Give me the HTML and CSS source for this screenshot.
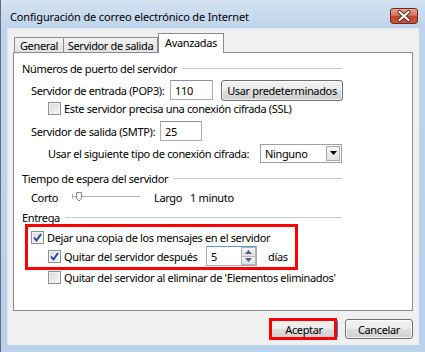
FILE: index.html
```html
<!DOCTYPE html>
<html>
<head>
  <title>Configuración de correo electrónico de Internet</title>
  <link rel="stylesheet" href="styles.css">
</head>
<body>
  <div class="frame">
    <div class="titlebar">
      <span class="title">Configuración de correo electrónico de Internet</span>
      <button class="close" aria-label="Cerrar">
        <svg width="28" height="16" viewBox="0 0 28 16">
          <path d="M9.5 4 L18.5 12 M18.5 4 L9.5 12" stroke="#5a2418" stroke-width="4" stroke-linecap="round" fill="none"/>
          <path d="M9.5 4 L18.5 12 M18.5 4 L9.5 12" stroke="#ffffff" stroke-width="2.2" stroke-linecap="round" fill="none"/>
        </svg>
      </button>
    </div>

    <div class="client">
      <div class="tabs">
        <div class="tab tab-general">General</div>
        <div class="tab tab-salida">Servidor de salida</div>
        <div class="tab tab-avanzadas active">Avanzadas</div>
      </div>

      <div class="panel">
        <!-- Números de puerto -->
        <div class="group-title first"><span>Números de puerto del servidor</span><i class="rule"></i></div>

        <div class="row tall indent1 row-pop3">
          <span class="label lbl-pop3">Servidor de entrada (POP3):</span>
          <span class="field field-pop3">110</span>
          <button class="btn btn-defaults">Usar predeterminados</button>
        </div>

        <div class="row small indent2">
          <span class="check"></span>
          <span>Este servidor precisa una conexión cifrada (SSL)</span>
        </div>

        <div class="row tall indent1 row-smtp">
          <span class="label lbl-smtp">Servidor de salida (SMTP):</span>
          <span class="field field-smtp">25</span>
        </div>

        <div class="row mid indent2 row-cifrada">
          <span class="label lbl-cifrada">Usar el siguiente tipo de conexión cifrada:</span>
          <span class="combo">
            <span class="combo-text">Ninguno</span>
            <span class="combo-arrow">
              <svg width="7" height="4" viewBox="0 0 7 4"><path d="M0 0 H7 L3.5 4 Z" fill="#000"/></svg>
            </span>
          </span>
        </div>

        <!-- Tiempo de espera -->
        <div class="group-title gt-tiempo"><span>Tiempo de espera del servidor</span><i class="rule"></i></div>

        <div class="row indent1 row-slider">
          <span class="label lbl-corto">Corto</span>
          <svg class="slider" width="68" height="12" viewBox="0 0 68 12">
            <rect x="0" y="5" width="68" height="1" fill="#b0b0b0"/>
            <rect x="0" y="6" width="68" height="1" fill="#ffffff"/>
            <rect x="0" y="3" width="1" height="5" fill="#b0b0b0"/>
            <path d="M4.5 1.5 H9.5 V7.5 L7 10 L4.5 7.5 Z" fill="#f4f4f4" stroke="#8a8a8a"/>
          </svg>
          <span class="largo">Largo</span>
          <span class="minuto">1 minuto</span>
        </div>

        <!-- Entrega -->
        <div class="group-title gt-entrega"><span>Entrega</span><i class="rule"></i></div>

        <div class="row indent1 row-copia">
          <span class="check checked">
            <svg width="11" height="11" viewBox="0 0 11 11"><path d="M2 5.5 L4.5 8.5 L9 2" stroke="#22409a" stroke-width="1.9" fill="none"/></svg>
          </span>
          <span>Dejar una copia de los mensajes en el servidor</span>
        </div>

        <div class="row tall indent2 row-quitar">
          <span class="check checked">
            <svg width="11" height="11" viewBox="0 0 11 11"><path d="M2 5.5 L4.5 8.5 L9 2" stroke="#22409a" stroke-width="1.9" fill="none"/></svg>
          </span>
          <span class="label lbl-quitar">Quitar del servidor después</span>
          <span class="spin">
            <span class="spin-text">5</span>
            <span class="spin-btns">
              <span class="spin-btn"><svg width="7" height="4" viewBox="0 0 7 4"><path d="M0 4 H7 L3.5 0 Z" fill="#4d6185"/></svg></span>
              <span class="spin-btn"><svg width="7" height="4" viewBox="0 0 7 4"><path d="M0 0 H7 L3.5 4 Z" fill="#4d6185"/></svg></span>
            </span>
          </span>
          <span class="dias">días</span>
        </div>

        <div class="row indent2 row-eliminar">
          <span class="check"></span>
          <span>Quitar del servidor al eliminar de 'Elementos eliminados'</span>
        </div>
      </div>

      <div class="actions">
        <button class="btn btn-main default">Aceptar</button>
        <button class="btn btn-main">Cancelar</button>
      </div>
    </div>

    <div class="mark mark-entrega"></div>
    <div class="mark mark-aceptar"></div>
  </div>
</body>
</html>
```

FILE: styles.css
```css
body {
  margin: 0;
  font-family: "Noto Sans", "Open Sans", sans-serif;
  font-size: 11px;
  letter-spacing: -0.35px;
  color: #000;
  background-color: #b9d1ea;
}

.frame {
  position: relative;
  width: 425px;
  height: 352px;
  box-sizing: border-box;
  border-left: 1px solid #5f6f80;
  background: linear-gradient(to bottom, #d3e2f2 0px, #bed4ec 28px, #b9d1ea 100%);
  overflow: hidden;
}

.titlebar {
  height: 28px;
  display: flex;
  align-items: center;
  padding-left: 9px;
  padding-right: 7px;
  box-sizing: border-box;
}

.title {
  flex: 1;
  margin-top: 5px;
  letter-spacing: -0.15px;
  color: #000;
}

.close {
  width: 28px;
  height: 16px;
  padding: 0;
  margin-top: 3px;
  border: 1px solid #6e2c20;
  border-radius: 3px;
  background: linear-gradient(to bottom, #e6a494 0%, #d5735c 45%, #c0432a 55%, #c9573c 100%);
  display: flex;
  align-items: center;
  justify-content: center;
  box-sizing: border-box;
}

.close svg {
  display: block;
  flex: none;
}

/* client area */
.client {
  margin-left: 6px;
  width: 412px;
  height: 317px;
  background-color: #f0f0f0;
  box-shadow: inset 1px 1px 0 #dfe7f0;
  padding-left: 6px;
  padding-top: 5px;
  box-sizing: border-box;
}

.tabs {
  display: flex;
  align-items: flex-end;
  height: 19px;
  padding-left: 1px;
  position: relative;
  z-index: 1;
}

.tab {
  height: 15px;
  box-sizing: border-box;
  border: 1px solid #898c95;
  border-bottom: none;
  background: linear-gradient(to bottom, #f2f2f2, #e3e3e3);
  display: flex;
  align-items: center;
  justify-content: center;
  white-space: nowrap;
}

.tab-general { width: 50px; }
.tab-salida { width: 94px; border-left: none; }
.tab-avanzadas { width: 66px; }

.tab.active {
  height: 20px;
  margin-bottom: -1px;
  background: #fff;
  padding-bottom: 2px;
}

.panel {
  width: 400px;
  height: 259px;
  box-sizing: border-box;
  border: 1px solid #898c95;
  background: #fff;
  padding-left: 8px;
  padding-top: 7px;
}

.group-title {
  width: 320px;
  height: 16px;
  display: flex;
  align-items: center;
}

.group-title span {
  margin-right: 5px;
}

.rule {
  flex: 1;
  height: 0;
  border-top: 1px solid #c5c9ce;
  border-bottom: 1px solid #fff;
  margin-top: 1px;
}

.gt-tiempo { margin-top: 7px; }
.gt-entrega { margin-top: 4px; }

.row {
  display: flex;
  align-items: center;
  height: 16px;
  white-space: nowrap;
}

.row.tall { height: 22px; }
.row.mid { height: 20px; }
.row.small { height: 14px; }

.indent1 { padding-left: 9px; }
.indent2 { padding-left: 26px; }

.row-pop3 { margin-top: 3px; }
.row-smtp { margin-top: 5px; }
.row-cifrada { margin-top: 1px; }
.row-slider { margin-top: 3px; }
.row-copia { margin-top: 4px; }
.row-eliminar { margin-top: 2px; }

.label { flex: none; }
.lbl-pop3 { width: 139px; }
.lbl-smtp { width: 129px; }
.lbl-cifrada { width: 212px; }
.lbl-corto { width: 41px; }
.lbl-quitar { width: 142px; }

.field {
  height: 20px;
  box-sizing: border-box;
  border: 1px solid #abadb3;
  border-top-color: #8e9196;
  background: #fff;
  display: flex;
  align-items: center;
  padding-left: 4px;
}

.field-pop3 { width: 43px; }
.field-smtp { width: 42px; }

.btn {
  font-family: "Noto Sans", "Open Sans", sans-serif;
  font-size: 11px;
  letter-spacing: -0.35px;
  color: #000;
  border: 1px solid #707070;
  border-radius: 3px;
  background: linear-gradient(to bottom, #f2f2f2 0%, #ebebeb 48%, #dddddd 52%, #cfcfcf 100%);
  box-shadow: inset 0 0 0 1px rgba(255, 255, 255, 0.7);
  padding: 0;
  box-sizing: border-box;
}

.btn-defaults {
  width: 122px;
  height: 21px;
  margin-left: 8px;
}

.check {
  flex: none;
  width: 13px;
  height: 13px;
  box-sizing: border-box;
  border: 1px solid #8e8f8f;
  background: linear-gradient(135deg, #d8d8d8, #f7f7f7);
  box-shadow: inset 0 0 0 1px #f4f4f4;
  margin-right: 3px;
  display: flex;
  align-items: center;
  justify-content: center;
}

.check svg { display: block; }

.combo {
  width: 82px;
  height: 19px;
  box-sizing: border-box;
  border: 1px solid #a0a0a0;
  background: #fff;
  display: flex;
  align-items: center;
  padding: 1px;
}

.combo-text {
  flex: 1;
  padding-left: 3px;
}

.combo-arrow {
  width: 14px;
  height: 15px;
  box-sizing: border-box;
  border: 1px solid #a8a8a8;
  background: linear-gradient(to bottom, #f6f6f6, #e2e2e2);
  display: flex;
  align-items: center;
  justify-content: center;
}

.combo-arrow svg,
.spin-btn svg { display: block; }

.slider {
  display: block;
  flex: none;
}

.largo { margin-left: 14px; }
.minuto { margin-left: 8px; }

.spin {
  width: 51px;
  height: 20px;
  box-sizing: border-box;
  border: 1px solid #abadb3;
  border-top-color: #5b9bd5;
  background: #fff;
  display: flex;
}

.spin-text {
  flex: 1;
  padding-left: 4px;
  display: flex;
  align-items: center;
}

.spin-btns {
  width: 15px;
  display: flex;
  flex-direction: column;
}

.spin-btn {
  flex: 1;
  border: 1px solid #b6b6b6;
  background: linear-gradient(to bottom, #f4f4f4, #e0e0e0);
  display: flex;
  align-items: center;
  justify-content: center;
}

.spin-btn + .spin-btn { border-top: none; }

.dias { margin-left: 11px; }

.actions {
  display: flex;
  justify-content: flex-end;
  gap: 7px;
  margin-top: 8px;
  width: 400px;
}

.btn-main {
  width: 68px;
  height: 20px;
}

.btn-main.default {
  border-color: #3c7fb1;
}

/* red highlight marks drawn over the dialog */
.mark {
  position: absolute;
  border: 3px solid #f00;
  box-sizing: border-box;
}

.mark-entrega {
  left: 24px;
  top: 224px;
  width: 273px;
  height: 46px;
}

.mark-aceptar {
  left: 268px;
  top: 318px;
  width: 68px;
  height: 22px;
}
```
